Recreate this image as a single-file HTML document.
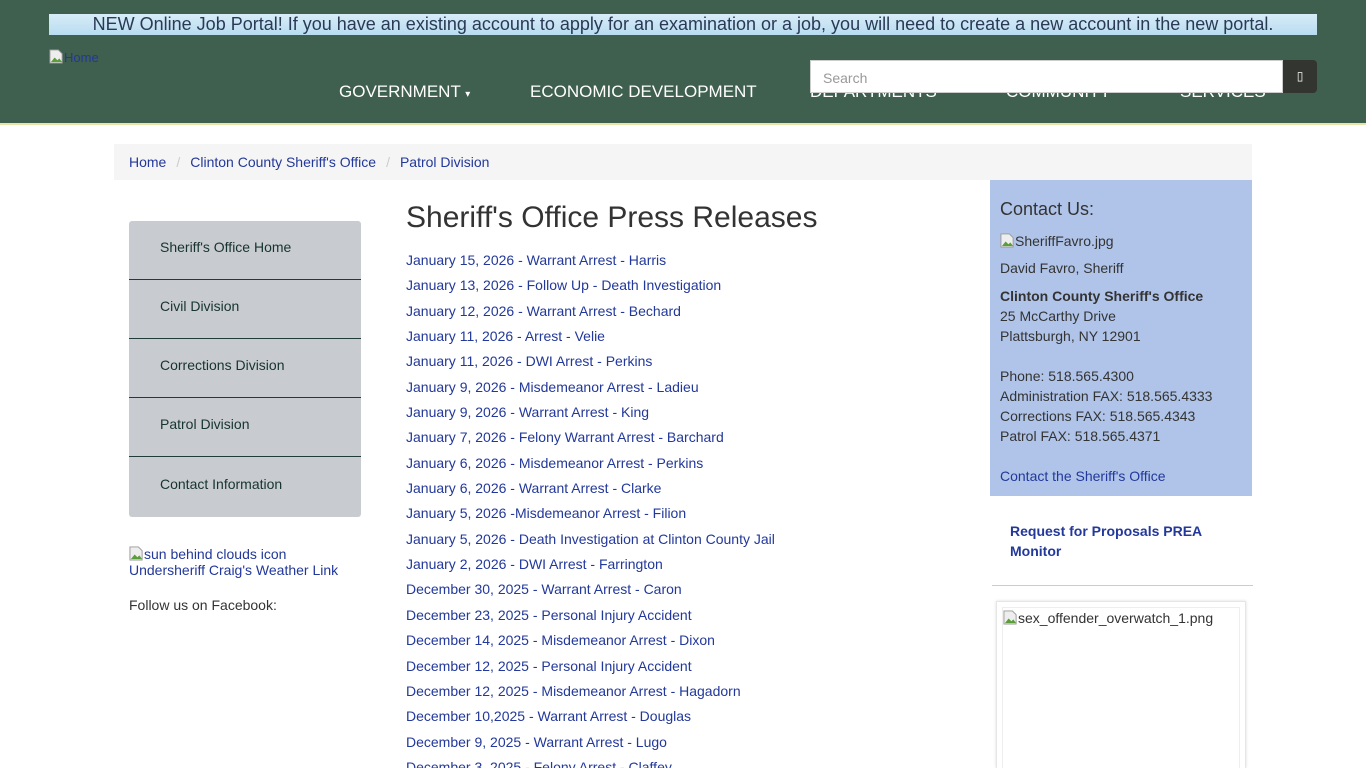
<!DOCTYPE html>
<html style="height:768px;overflow:hidden"><head><meta charset="utf-8">
<style>
*{box-sizing:border-box;margin:0;padding:0}
body{width:1366px;height:768px;overflow:hidden;background:#fff;font-family:"Liberation Sans",Arial,sans-serif;position:relative;color:#333}
a{color:#22389a;text-decoration:none}
.hdr{position:absolute;left:0;top:0;width:1366px;height:125px;background:#3f5f4f;border-bottom:2px solid #e8e4a8}
.banner{position:absolute;left:49px;top:14px;width:1268px;height:21px;background:linear-gradient(#d8ecf8,#b8dcf0);color:#2a3a55;font-size:18px;line-height:21px;text-align:center}
.logo{position:absolute;left:49px;top:49px;font-size:13px;color:#22389a}
.nav{position:absolute;top:82px;color:#fff;font-size:17px}
.search{position:absolute;left:810px;top:60px;width:473px;height:33px;background:#fff;border:1px solid #ccc;font-size:14px;color:#999;padding:9px 12px}
.sbtn{position:absolute;left:1283px;top:60px;width:34px;height:33px;background:#333630;border-radius:0 4px 4px 0;color:#fff;font-size:12px;text-align:center;line-height:33px}
.bc{position:absolute;left:114px;top:144px;width:1138px;height:36px;background:#f5f5f5;font-size:14px;line-height:36px;padding-left:15px}
.bc span.s{color:#ccc;padding:0 10px}
.menu{position:absolute;left:129px;top:221px;width:232px;height:296px;background:#c8ccd1;border-radius:3px}
.menu div{height:59px;border-bottom:1px solid #213b38;padding-left:31px;line-height:52px;font-size:14px;color:#173330}
.menu div:last-child{border-bottom:none;line-height:54px}
.wx{position:absolute;left:129px;top:546px;font-size:14px;line-height:16px}
.fb{position:absolute;left:129px;top:597px;font-size:14px;color:#333}
h1{position:absolute;left:406px;top:201px;font-size:30px;font-weight:normal;color:#333;white-space:nowrap}
.list{position:absolute;left:406px;top:248px;font-size:14px;line-height:25.35px}
.list a{display:block;white-space:nowrap}
.contact{position:absolute;left:990px;top:180px;width:262px;height:316px;background:#b0c4e9;padding:19px 10px;font-size:14px;color:#333;line-height:20px}
.contact h3{font-size:18px;font-weight:normal;line-height:20px;margin-bottom:12px}
.rfp{position:absolute;left:1010px;top:521px;width:220px;font-size:14px;font-weight:bold;line-height:20px}
.hr{position:absolute;left:992px;top:585px;width:261px;height:1px;background:#ccc}
.box{position:absolute;left:996px;top:601px;width:250px;height:167px;border:1px solid #e6e6e6;border-bottom:none;box-shadow:0 0 3px #ddd}
.box .in{position:absolute;left:5px;top:5px;right:5px;bottom:0;border:1px solid #eee;border-bottom:none;font-size:14px;padding:2px 0 0 0}
.ico{display:inline-block;width:15px;height:15px;vertical-align:-2px}
</style></head><body>
<div class="hdr">
<div class="banner">NEW Online Job Portal! If you have an existing account to apply for an examination or a job, you will need to create a new account in the new portal.</div>
<div class="logo"><svg class="ico" viewBox="0 0 16 16"><path d="M1 1h9l4 4v10H1z" fill="#eee" stroke="#999"/><path d="M2 14l4-5 3 3 2-2 3 4z" fill="#5a9e3a"/></svg>Home</div>
<div class="nav" style="left:339px">GOVERNMENT <span style="font-size:10px">&#9662;</span></div>
<div class="nav" style="left:530px">ECONOMIC DEVELOPMENT</div>
<div class="nav" style="left:810px">DEPARTMENTS</div>
<div class="nav" style="left:1006px">COMMUNITY</div>
<div class="nav" style="left:1180px">SERVICES</div>
<div class="search">Search</div>
<div class="sbtn">&#9647;</div>
</div>
<div class="bc"><a>Home</a><span class="s">/</span><a>Clinton County Sheriff's Office</a><span class="s">/</span><a>Patrol Division</a></div>
<div class="menu"><div>Sheriff's Office Home</div><div>Civil Division</div><div>Corrections Division</div><div>Patrol Division</div><div>Contact Information</div></div>
<div class="wx"><a><svg class="ico" viewBox="0 0 16 16"><path d="M1 1h9l4 4v10H1z" fill="#eee" stroke="#999"/><path d="M2 14l4-5 3 3 2-2 3 4z" fill="#5a9e3a"/></svg>sun behind clouds icon<br>Undersheriff Craig's Weather Link</a></div>
<div class="fb">Follow us on Facebook:</div>
<h1>Sheriff's Office Press Releases</h1>
<div class="list">
<a>January 15, 2026 - Warrant Arrest - Harris</a>
<a>January 13, 2026 - Follow Up - Death Investigation</a>
<a>January 12, 2026 - Warrant Arrest - Bechard</a>
<a>January 11, 2026 - Arrest - Velie</a>
<a>January 11, 2026 - DWI Arrest - Perkins</a>
<a>January 9, 2026 - Misdemeanor Arrest - Ladieu</a>
<a>January 9, 2026 - Warrant Arrest - King</a>
<a>January 7, 2026 - Felony Warrant Arrest - Barchard</a>
<a>January 6, 2026 - Misdemeanor Arrest - Perkins</a>
<a>January 6, 2026 - Warrant Arrest - Clarke</a>
<a>January 5, 2026 -Misdemeanor Arrest - Filion</a>
<a>January 5, 2026 - Death Investigation at Clinton County Jail</a>
<a>January 2, 2026 - DWI Arrest - Farrington</a>
<a>December 30, 2025 - Warrant Arrest - Caron</a>
<a>December 23, 2025 - Personal Injury Accident</a>
<a>December 14, 2025 - Misdemeanor Arrest - Dixon</a>
<a>December 12, 2025 - Personal Injury Accident</a>
<a>December 12, 2025 - Misdemeanor Arrest - Hagadorn</a>
<a>December 10,2025 - Warrant Arrest - Douglas</a>
<a>December 9, 2025 - Warrant Arrest - Lugo</a>
<a>December 3, 2025 - Felony Arrest - Claffey</a>
</div>
<div class="contact">
<h3>Contact Us:</h3>
<div style="margin-bottom:7px"><svg class="ico" viewBox="0 0 16 16"><path d="M1 1h9l4 4v10H1z" fill="#eee" stroke="#999"/><path d="M2 14l4-5 3 3 2-2 3 4z" fill="#5a9e3a"/></svg>SheriffFavro.jpg</div>
<div style="margin-bottom:8px">David Favro, Sheriff</div>
<b>Clinton County Sheriff's Office</b><br>25 McCarthy Drive<br>Plattsburgh, NY 12901<br><br>
Phone: 518.565.4300<br>Administration FAX: 518.565.4333<br>Corrections FAX: 518.565.4343<br>Patrol FAX: 518.565.4371<br><br>
<a>Contact the Sheriff's Office</a>
</div>
<div class="rfp"><a>Request for Proposals PREA Monitor</a></div>
<div class="hr"></div>
<div class="box"><div class="in"><svg class="ico" viewBox="0 0 16 16"><path d="M1 1h9l4 4v10H1z" fill="#eee" stroke="#999"/><path d="M2 14l4-5 3 3 2-2 3 4z" fill="#5a9e3a"/></svg>sex_offender_overwatch_1.png</div></div>
</body></html>
